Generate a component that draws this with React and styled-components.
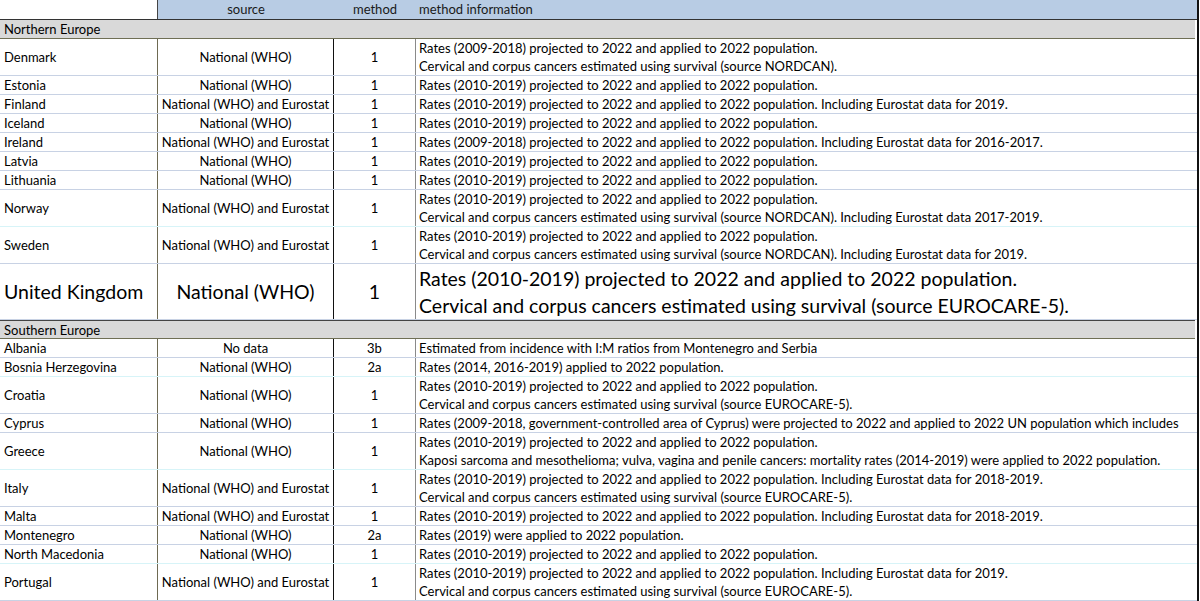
import React from "react";
import styled, { createGlobalStyle } from "styled-components";

const GlobalStyle = createGlobalStyle`
  html, body {
    margin: 0;
    padding: 0;
    background: #fff;
  }
  body {
    font-family: Lato, "Liberation Sans", sans-serif;
    color: #000;
  }
`;

const Sheet = styled.div`
  width: 1199px;
  height: 601px;
  overflow: hidden;
  border-right: 2px solid #111;
  box-sizing: border-box;
  font-size: 13px;
`;

const Row = styled.div`
  display: grid;
  grid-template-columns: 158px 176px 82px 1fr;
  height: ${(p) => p.h}px;
  box-sizing: border-box;
  border-bottom: 1px solid ${(p) => (p.soft ? "#d7f4f8" : "#c8d2e4")};
  font-size: ${(p) => (p.big ? "19.5px" : "inherit")};
  line-height: ${(p) => (p.big ? "27px" : "18.5px")};
`;

const HeadRow = styled.div`
  display: grid;
  grid-template-columns: 158px 176px 82px 1fr;
  height: 19.5px;
  box-sizing: border-box;
  border-bottom: 1px solid #333;
  line-height: 19px;
`;

const HeadCell = styled.div`
  background: ${(p) => (p.blank ? "#fff" : "#b8cce4")};
  border-right: ${(p) => (p.blank ? "1px solid #444" : "none")};
  text-align: ${(p) => (p.left ? "left" : "center")};
  padding-left: ${(p) => (p.left ? "3px" : "0")};
  color: #1a1a1a;
`;

const GroupRow = styled.div`
  height: 19px;
  box-sizing: border-box;
  background: #d9d9d9;
  border-top: ${(p) => (p.top ? "1px solid #444" : "none")};
  border-bottom: 1px solid #6f6f55;
  padding-left: 4px;
  line-height: 18.5px;
  margin-right: 2px;
`;

const Cell = styled.div`
  box-sizing: border-box;
  display: flex;
  flex-direction: column;
  justify-content: center;
  white-space: nowrap;
  overflow: hidden;
  padding-top: 1px;
  border-right: 1px solid ${(p) => p.edge || "transparent"};
  text-align: ${(p) => (p.center ? "center" : "left")};
  padding-left: ${(p) => (p.center ? "0" : p.pad || "4px")};
`;

const rows = [
  { group: "Northern Europe" },
  { name: "Denmark", src: "National (WHO)", m: "1", info: ["Rates (2009-2018) projected to 2022 and applied to 2022 population.", "Cervical and corpus cancers estimated using survival (source NORDCAN)."] },
  { name: "Estonia", src: "National (WHO)", m: "1", info: ["Rates (2010-2019) projected to 2022 and applied to 2022 population."] },
  { name: "Finland", src: "National (WHO) and Eurostat", m: "1", info: ["Rates (2010-2019) projected to 2022 and applied to 2022 population. Including Eurostat data for 2019."] },
  { name: "Iceland", src: "National (WHO)", m: "1", info: ["Rates (2010-2019) projected to 2022 and applied to 2022 population."] },
  { name: "Ireland", src: "National (WHO) and Eurostat", m: "1", info: ["Rates (2009-2018) projected to 2022 and applied to 2022 population. Including Eurostat data for 2016-2017."] },
  { name: "Latvia", src: "National (WHO)", m: "1", info: ["Rates (2010-2019) projected to 2022 and applied to 2022 population."] },
  { name: "Lithuania", src: "National (WHO)", m: "1", info: ["Rates (2010-2019) projected to 2022 and applied to 2022 population."] },
  { name: "Norway", src: "National (WHO) and Eurostat", m: "1", soft: true, info: ["Rates (2010-2019) projected to 2022 and applied to 2022 population.", "Cervical and corpus cancers estimated using survival (source NORDCAN). Including Eurostat data 2017-2019."] },
  { name: "Sweden", src: "National (WHO) and Eurostat", m: "1", info: ["Rates (2010-2019) projected to 2022 and applied to 2022 population.", "Cervical and corpus cancers estimated using survival (source NORDCAN). Including Eurostat data for 2019."] },
  { name: "United Kingdom", src: "National (WHO)", m: "1", big: true, info: ["Rates (2010-2019) projected to 2022 and applied to 2022 population.", "Cervical and corpus cancers estimated using survival (source EUROCARE-5)."] },
  { group: "Southern Europe", top: true },
  { name: "Albania", src: "No data", m: "3b", info: ["Estimated from incidence with I:M ratios from Montenegro and Serbia"] },
  { name: "Bosnia Herzegovina", src: "National (WHO)", m: "2a", soft: true, info: ["Rates (2014, 2016-2019) applied to 2022 population."] },
  { name: "Croatia", src: "National (WHO)", m: "1", info: ["Rates (2010-2019) projected to 2022 and applied to 2022 population.", "Cervical and corpus cancers estimated using survival (source EUROCARE-5)."] },
  { name: "Cyprus", src: "National (WHO)", m: "1", info: ["Rates (2009-2018, government-controlled area of Cyprus) were projected to 2022 and applied to 2022 UN population which includes"] },
  { name: "Greece", src: "National (WHO)", m: "1", soft: true, info: ["Rates (2010-2019) projected to 2022 and applied to 2022 population.", "Kaposi sarcoma and mesothelioma; vulva, vagina and penile cancers: mortality rates (2014-2019) were applied to 2022 population."] },
  { name: "Italy", src: "National (WHO) and Eurostat", m: "1", info: ["Rates (2010-2019) projected to 2022 and applied to 2022 population. Including Eurostat data for 2018-2019.", "Cervical and corpus cancers estimated using survival (source EUROCARE-5)."] },
  { name: "Malta", src: "National (WHO) and Eurostat", m: "1", info: ["Rates (2010-2019) projected to 2022 and applied to 2022 population. Including Eurostat data for 2018-2019."] },
  { name: "Montenegro", src: "National (WHO)", m: "2a", info: ["Rates (2019) were applied to 2022 population."] },
  { name: "North Macedonia", src: "National (WHO)", m: "1", soft: true, info: ["Rates (2010-2019) projected to 2022 and applied to 2022 population."] },
  { name: "Portugal", src: "National (WHO) and Eurostat", m: "1", info: ["Rates (2010-2019) projected to 2022 and applied to 2022 population.  Including Eurostat data for 2019.", "Cervical and corpus cancers estimated using survival (source EUROCARE-5)."] },
];

const heightOf = (r) => (r.big ? 56 : r.info.length === 2 ? 37 : 19);

export default function App() {
  return (
    <>
      <GlobalStyle />
      <Sheet>
        <HeadRow>
          <HeadCell blank />
          <HeadCell>source</HeadCell>
          <HeadCell>method</HeadCell>
          <HeadCell left>method information</HeadCell>
        </HeadRow>
        {rows.map((r) =>
          r.group ? (
            <GroupRow key={r.group} top={r.top}>
              {r.group}
            </GroupRow>
          ) : (
            <Row key={r.name} h={heightOf(r)} big={r.big} soft={r.soft}>
              <Cell edge="#6e6a52">{r.name}</Cell>
              <Cell center edge="#111">{r.src}</Cell>
              <Cell center edge="#8a8a8a">{r.m}</Cell>
              <Cell pad="3px">
                {r.info.map((line) => (
                  <div key={line}>{line}</div>
                ))}
              </Cell>
            </Row>
          )
        )}
      </Sheet>
    </>
  );
}
